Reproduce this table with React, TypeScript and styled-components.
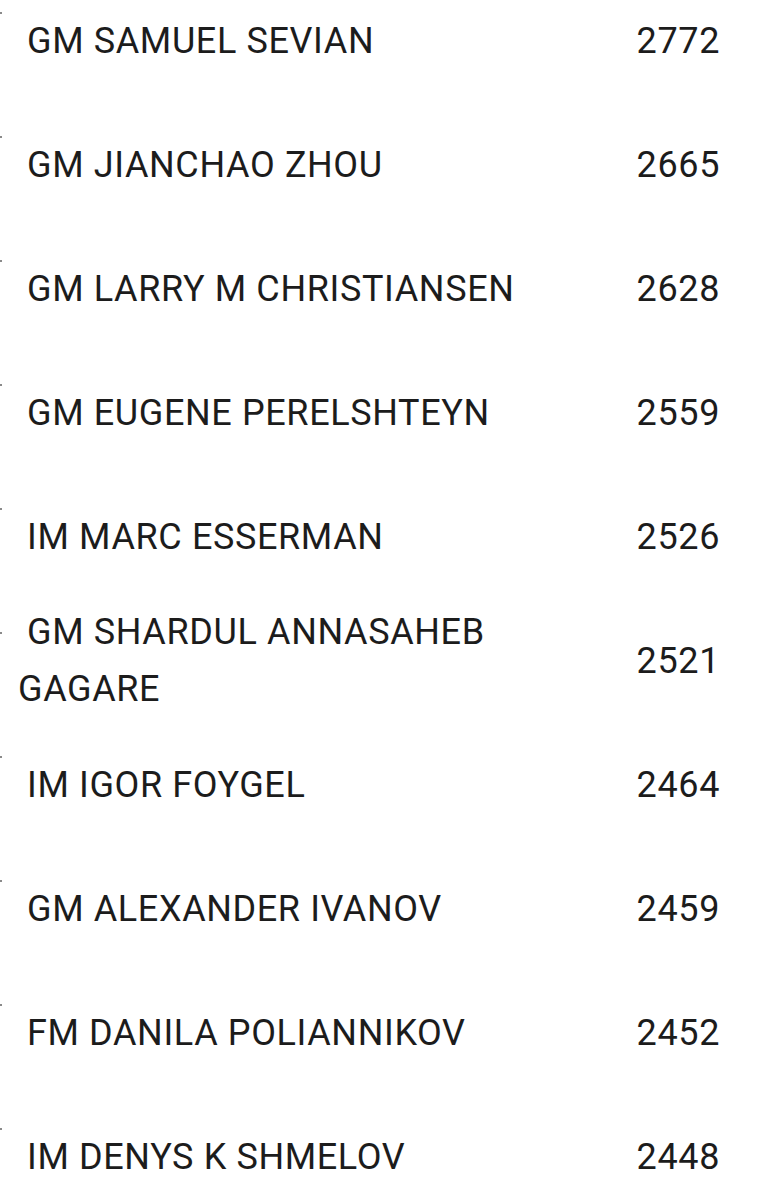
import React from "react";
import styled, { createGlobalStyle } from "styled-components";

const Global = createGlobalStyle`
  html, body {
    margin: 0;
    padding: 0;
    background: #ffffff;
  }
  body {
    font-family: Roboto, "Noto Sans", Arial, sans-serif;
    overflow: hidden;
  }
`;

const Page = styled.div`
  width: 758px;
  height: 1200px;
  overflow: hidden;
  background: #ffffff;
`;

const Table = styled.div`
  display: flex;
  flex-direction: column;
  margin-top: -21px;
`;

const Row = styled.div`
  position: relative;
  display: flex;
  align-items: center;
  height: 124px;
  padding-left: 18px;

  &::before {
    content: "";
    position: absolute;
    left: 0;
    top: 33px;
    width: 2px;
    height: 2px;
    background: #8a8a8a;
  }
`;

const Name = styled.div`
  width: 540px;
  font-size: 36px;
  line-height: 57px;
  color: #1c1c1c;
  text-indent: 9px;
  letter-spacing: 0.62px;
`;

const Rating = styled.div`
  flex: 1;
  padding-right: 38px;
  text-align: right;
  font-size: 36px;
  line-height: 57px;
  color: #1c1c1c;
  letter-spacing: 0.62px;
`;

const players: [string, number][] = [
  ["GM SAMUEL SEVIAN", 2772],
  ["GM JIANCHAO ZHOU", 2665],
  ["GM LARRY M CHRISTIANSEN", 2628],
  ["GM EUGENE PERELSHTEYN", 2559],
  ["IM MARC ESSERMAN", 2526],
  ["GM SHARDUL ANNASAHEB GAGARE", 2521],
  ["IM IGOR FOYGEL", 2464],
  ["GM ALEXANDER IVANOV", 2459],
  ["FM DANILA POLIANNIKOV", 2452],
  ["IM DENYS K SHMELOV", 2448],
];

export default function App() {
  return (
    <Page>
      <Global />
      <Table>
        {players.map(([name, rating]) => (
          <Row key={name}>
            <Name>{name}</Name>
            <Rating>{rating}</Rating>
          </Row>
        ))}
      </Table>
    </Page>
  );
}
